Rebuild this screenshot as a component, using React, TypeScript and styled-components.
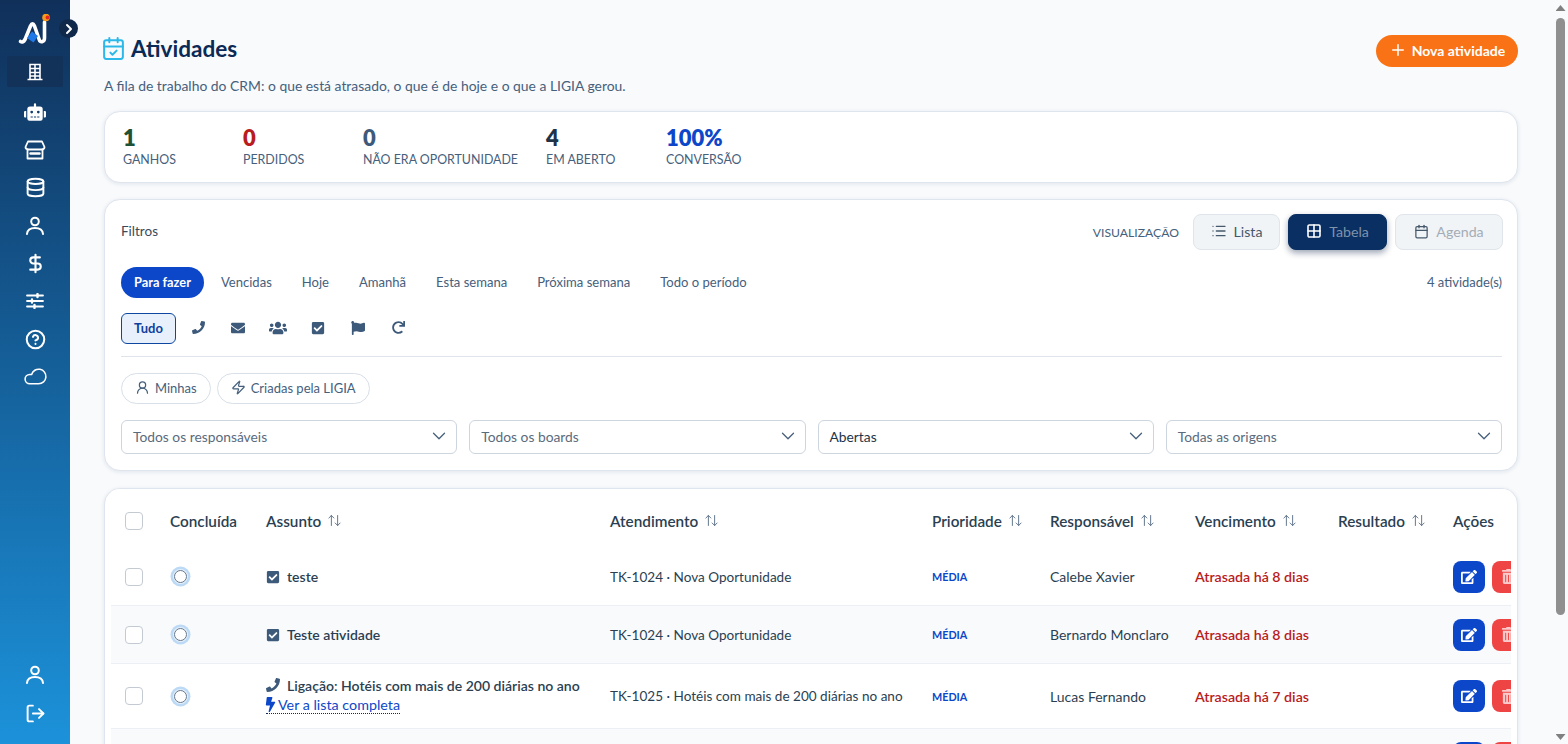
import styled, { createGlobalStyle } from 'styled-components'
import {
  ArrowUpDown, Calendar, CalendarCheck, ChevronDown, ChevronRight, CircleHelp, Cloud, Database,
  DollarSign, Grid2x2, List, LogOut, Plus, UserRound, Zap,
} from 'lucide-react'
import { FaBolt, FaCheckSquare, FaEdit, FaEnvelope, FaFlag, FaPhone, FaRedo, FaRobot, FaTrashAlt, FaUsers } from 'react-icons/fa'

const GlobalStyle = createGlobalStyle`
  * { box-sizing: border-box; }
  html, body { margin: 0; height: 100%; overflow: hidden; }
  body {
    font-family: "Lato", "Noto Sans", sans-serif;
    font-size: 14px;
    color: #1e3348;
    background: #f8fafc;
  }
  button { font-family: inherit; }
`

const Layout = styled.div`
  display: flex;
  height: 744px;
`

const Sidebar = styled.aside`
  position: relative;
  flex: 0 0 70px;
  display: flex;
  flex-direction: column;
  align-items: center;
  padding: 14px 7px 12px;
  background: linear-gradient(180deg, #10305a 0%, #15609a 50%, #1c92da 100%);
`

const Logo = styled.div`
  height: 31px;
  margin-bottom: 11px;
  display: flex;
`

const CollapseBtn = styled.button`
  position: absolute;
  top: 19px;
  left: 59px;
  width: 19px;
  height: 19px;
  padding: 0;
  border: 0;
  border-radius: 50%;
  background: #10294a;
  color: #fff;
  display: flex;
  align-items: center;
  justify-content: center;
`

const NavItem = styled.a<{ $active?: boolean }>`
  width: 56px;
  height: ${(p) => (p.$active ? '31px' : '37.8px')};
  margin-bottom: ${(p) => (p.$active ? '6.5px' : '0')};
  display: flex;
  align-items: center;
  justify-content: center;
  color: #fff;
  border-radius: 2px;
  background: ${(p) => (p.$active ? '#12325a' : 'transparent')};
`

const NavSpacer = styled.div`
  flex: 1;
`

const MirrorCloud = styled(Cloud)`
  transform: scaleX(-1);
`

const Main = styled.main`
  flex: 1;
  min-width: 0;
  height: 744px;
  overflow: hidden;
  padding: 33px 35px 0 34px;
`

const ScrollRail = styled.div`
  flex: 0 0 15px;
  height: 744px;
  display: flex;
  flex-direction: column;
  align-items: center;
  background: #f8fafc;
  padding: 5px 0 4px;
`

const ScrollThumb = styled.div`
  flex: none;
  width: 9px;
  height: 597px;
  margin: 7px 0 auto;
  border-radius: 5px;
  background: #8f8f8f;
`

const ScrollArrow = styled.div<{ $down?: boolean }>`
  flex: none;
  width: 10px;
  height: 6px;
  background: #808080;
  clip-path: ${(p) => (p.$down ? 'polygon(0 0, 100% 0, 50% 100%)' : 'polygon(50% 0, 100% 100%, 0 100%)')};
`

const PageHead = styled.header`
  display: flex;
  align-items: center;
  justify-content: space-between;
  height: 34px;
`

const TitleWrap = styled.div`
  display: flex;
  align-items: center;
  gap: 5px;
  margin: 0 0 4px -3px;
  color: #2cb8e8;
`

const Title = styled.h1`
  margin: 0;
  font-size: 22.6px;
  font-weight: 700;
  color: #0b2a55;
`

const PrimaryBtn = styled.button`
  height: 32px;
  width: 142px;
  margin-top: 2px;
  padding: 0 0 2px;
  display: flex;
  align-items: center;
  justify-content: center;
  gap: 5px;
  border: 0;
  border-radius: 16px;
  background: #f97316;
  color: #fff;
  font-size: 14px;
  font-weight: 700;
`

const Subtitle = styled.p`
  margin: 9px 0 16px;
  height: 19px;
  line-height: 19px;
  font-size: 13.9px;
  color: #46607c;
`

const Card = styled.section`
  background: #fff;
  border: 1px solid #dfe5ee;
  border-radius: 16px;
  box-shadow: 0 1px 4px rgba(15, 40, 80, 0.1);
`

const StatsCard = styled(Card)`
  height: 72px;
  display: flex;
  gap: 28px;
  padding: 13px 18px;
  margin-bottom: 16px;
`

const Stat = styled.div`
  min-width: 92px;
`

const StatValue = styled.div<{ $color: string }>`
  font-size: 22px;
  font-weight: 800;
  line-height: 26px;
  color: ${(p) => p.$color};
`

const StatLabel = styled.div`
  margin-top: 1px;
  font-size: 12.4px;
  line-height: 16px;
  color: #46607c;
`

const FilterCard = styled(Card)`
  height: 272px;
  padding: 14px 15px 0 16px;
  margin-bottom: 17px;
`

const FilterHead = styled.div`
  display: flex;
  align-items: center;
  justify-content: space-between;
  height: 36px;
  margin-bottom: 17px;
`

const FilterLabel = styled.span`
  margin-bottom: 2px;
  font-size: 13.5px;
  color: #3a4a5a;
`

const ViewGroup = styled.div`
  display: flex;
  align-items: center;
  gap: 8px;
  margin-right: -1px;
`

const ViewCaption = styled.span`
  font-size: 12.2px;
  color: #46607c;
  margin-right: 6px;
`

const ViewBtn = styled.button<{ $active?: boolean; $width: number; $muted?: boolean }>`
  height: 36px;
  width: ${(p) => p.$width}px;
  padding: 0 0 2px;
  display: flex;
  align-items: center;
  justify-content: center;
  gap: 7px;
  border-radius: 8px;
  font-size: 14.2px;
  border: 1px solid ${(p) => (p.$active ? '#0a2f63' : '#dfe5ea')};
  background: ${(p) => (p.$active ? '#0a2f63' : '#f1f4f6')};
  color: ${(p) => (p.$active ? '#fff' : '#46586c')};
  box-shadow: ${(p) => (p.$active ? '0 3px 6px rgba(10, 30, 70, 0.4)' : 'none')};

  span {
    color: ${(p) => (p.$active ? '#7f93aa' : p.$muted ? '#a3acb6' : '#46586c')};
  }
`

const PeriodRow = styled.div`
  display: flex;
  align-items: center;
  gap: 4px;
  height: 31px;
  margin-bottom: 15px;
`

const PeriodTab = styled.button<{ $active?: boolean }>`
  height: 31px;
  padding: 0 13px 2px;
  border: 0;
  border-radius: 16px;
  font-size: ${(p) => (p.$active ? '12.8px' : '13.05px')};
  font-weight: ${(p) => (p.$active ? 700 : 400)};
  background: ${(p) => (p.$active ? '#0d47c9' : 'transparent')};
  color: ${(p) => (p.$active ? '#fff' : '#46607c')};
`

const ActivityCount = styled.span`
  margin: 0 0 2px auto;
  font-size: 13px;
  color: #46607c;
`

const TypeRow = styled.div`
  display: flex;
  align-items: center;
  gap: 4px;
  height: 31px;
`

const TypeAll = styled.button`
  width: 55px;
  height: 31px;
  padding: 0 0 2px;
  border: 1px solid #0d47a1;
  border-radius: 6px;
  background: #e8f1fb;
  color: #0d3f9e;
  font-size: 13px;
  font-weight: 700;
`

const TypeBtn = styled.button`
  width: 36px;
  height: 31px;
  padding: 0 0 2px;
  border: 0;
  background: none;
  color: #3e5a7a;
  display: flex;
  align-items: center;
  justify-content: center;
`

const Divider = styled.hr`
  border: 0;
  border-top: 1px solid #dfe3ea;
  margin: 12px 0 16px;
`

const ChipRow = styled.div`
  display: flex;
  gap: 6px;
  margin-bottom: 16px;
`

const Chip = styled.button`
  height: 31px;
  padding: 0 13px 2px;
  display: flex;
  align-items: center;
  gap: 5px;
  border: 1px solid #d8dfe8;
  border-radius: 16px;
  background: #fff;
  color: #46607c;
  font-size: 13px;
`

const SelectGrid = styled.div`
  display: grid;
  grid-template-columns: repeat(4, 1fr);
  gap: 12px;
`

const SelectBox = styled.div<{ $filled?: boolean }>`
  height: 34px;
  padding: 0 6px 2px 11px;
  display: flex;
  align-items: center;
  justify-content: space-between;
  border: 1px solid #cdd5df;
  border-radius: 6px;
  font-size: 13.8px;
  color: ${(p) => (p.$filled ? '#1e3348' : '#5a6b7d')};

  svg { color: #46607c; }
`

const TableCard = styled(Card)`
  padding: 0 6px;
  overflow: hidden;
`

const TableClip = styled.div`
  overflow: hidden;
`

const Row = styled.div<{ $shade?: boolean; $tall?: boolean }>`
  display: grid;
  grid-template-columns: 45px 96px 344px 322px 118px 145px 143px 115px 100px;
  align-items: center;
  width: 1460px;
  padding-left: 14px;
  height: ${(p) => (p.$tall ? '65px' : '58px')};
  background: ${(p) => (p.$shade ? '#f8fafc' : '#fff')};
  border-bottom: 1px solid #eceff3;
`

const HeadRow = styled(Row)`
  height: 59px;
  padding-top: 4px;
  border-bottom: 0;
`

const HeadCell = styled.div`
  display: flex;
  align-items: center;
  gap: 6px;
  font-size: 15.3px;
  font-weight: 600;
  color: #2b3f52;

  svg { color: #5c7088; }
`

const Check = styled.span`
  display: block;
  width: 18px;
  height: 18px;
  border: 1px solid #c4cad2;
  border-radius: 4px;
  background: #fff;
`

const Radio = styled.span`
  display: block;
  width: 13px;
  height: 13px;
  margin-left: 4px;
  border: 1.5px solid #66788c;
  border-radius: 50%;
  background: #fff;
  box-shadow: 0 0 0 1px #e6f1fb, 0 0 0 3.5px #bcd9f5;
`

const SubjectLine = styled.div`
  display: flex;
  align-items: center;
  gap: 7px;
  font-size: 14.05px;
  font-weight: 600;
  color: #2b3f52;

  svg { color: #3e5a7a; }
`

const SubjectLink = styled.a`
  display: inline-flex;
  align-items: center;
  gap: 1px;
  margin-top: 3px;
  font-size: 14.3px;
  color: #0d47c9;
  border-bottom: 1px dotted #0b2a55;
  line-height: 16px;

  svg {
    color: #0d47c9;
    margin: 0 -1px 0 -3px;
  }
`

const Cell = styled.div<{ $ticket?: boolean }>`
  font-size: ${(p) => (p.$ticket ? '13.55px' : '14px')};
  color: #2b3f52;
`

const Priority = styled.span`
  font-size: 10.8px;
  font-weight: 700;
  color: #0d47c9;
`

const Overdue = styled.span`
  font-size: 14.2px;
  font-weight: 600;
  color: #b91c1c;
`

const Actions = styled.div`
  display: flex;
  gap: 7px;
`

const ActionBtn = styled.button<{ $danger?: boolean }>`
  flex: 0 0 32px;
  width: 32px;
  height: 32px;
  padding: 0;
  border: 0;
  border-radius: 8px;
  display: flex;
  align-items: center;
  justify-content: center;
  color: ${(p) => (p.$danger ? '#fbc9c9' : '#fff')};
  background: ${(p) => (p.$danger ? '#ef4444' : '#0d47c9')};
`

const LogoMark = () => (
  <svg width="34" height="31" viewBox="0 0 34 31">
    <path d="M2.5 27.5 Q5 29 7 25.5 L12.5 12 Q14.5 7.5 16.5 12 L21 25 Q22 28.5 24.5 27.5 Q26.5 27 26.5 24 L26.5 8" fill="none" stroke="#fff" strokeWidth="3.6" strokeLinecap="round" strokeLinejoin="round" />
    <path d="M14 17.5 L20 22 L15.5 28.5 L9 24 Z" fill="#1e78e6" />
    <circle cx="28" cy="3.5" r="3.8" fill="#f59a1c" />
    <circle cx="29.5" cy="3.5" r="1.9" fill="#e5261f" />
  </svg>
)

const BuildingGlyph = () => (
  <svg width="16" height="18" viewBox="0 0 16 18" fill="none" stroke="currentColor" strokeWidth="1.6">
    <path d="M3 16.5 V1.5 H13 V16.5 M0.5 16.5 H15.5 M8 1.5 V16.5 M3 5.5 H13 M3 9.5 H13 M3 13 H13" />
  </svg>
)

const StoreGlyph = () => (
  <svg width="22" height="20" viewBox="0 0 22 20" fill="none" stroke="currentColor" strokeWidth="1.8" strokeLinejoin="round" strokeLinecap="round">
    <path d="M4 1.5 H18 L20.5 7 Q20.5 9.5 17.5 9.5 H4.5 Q1.5 9.5 1.5 7 Z" />
    <path d="M3.5 9.5 V18.5 H18.5 V9.5" />
    <path d="M6.5 13.5 H15.5" strokeWidth="2.4" />
  </svg>
)

const UserGlyph = () => (
  <svg width="20" height="20" viewBox="0 0 20 20" fill="none" stroke="currentColor" strokeWidth="2" strokeLinecap="round">
    <circle cx="10" cy="5.5" r="3.8" />
    <path d="M2 18 Q2.5 12 10 12 Q17.5 12 18 18" />
  </svg>
)

const SlidersGlyph = () => (
  <svg width="18" height="16" viewBox="0 0 18 16" fill="none" stroke="currentColor" strokeWidth="1.8" strokeLinecap="round">
    <path d="M1 2.5 H17 M1 8 H17 M1 13.5 H17" />
    <path d="M11.5 1 V4 M6 6.5 V9.5 M8.5 12 V15" strokeWidth="2.4" />
  </svg>
)

const rows = [
  { kind: 'task', subject: 'teste', ticket: 'TK-1024 · Nova Oportunidade', owner: 'Calebe Xavier', due: 'Atrasada há 8 dias' },
  { kind: 'task', subject: 'Teste atividade', ticket: 'TK-1024 · Nova Oportunidade', owner: 'Bernardo Monclaro', due: 'Atrasada há 8 dias', shade: true },
  { kind: 'call', subject: 'Ligação: Hotéis com mais de 200 diárias no ano', ticket: 'TK-1025 · Hotéis com mais de 200 diárias no ano', owner: 'Lucas Fernando', due: 'Atrasada há 7 dias', link: 'Ver a lista completa' },
]

const columns = ['Assunto', 'Atendimento', 'Prioridade', 'Responsável', 'Vencimento', 'Resultado']
const periods = ['Vencidas', 'Hoje', 'Amanhã', 'Esta semana', 'Próxima semana', 'Todo o período']
const selects = [
  { label: 'Todos os responsáveis' },
  { label: 'Todos os boards' },
  { label: 'Abertas', filled: true },
  { label: 'Todas as origens' },
]

const RowActions = () => (
  <Actions>
    <ActionBtn><FaEdit size={16} /></ActionBtn>
    <ActionBtn $danger><FaTrashAlt size={15} /></ActionBtn>
  </Actions>
)

export default function App() {
  return (
    <Layout>
      <GlobalStyle />
      <Sidebar>
        <Logo><LogoMark /></Logo>
        <CollapseBtn><ChevronRight size={16} strokeWidth={3} /></CollapseBtn>
        <NavItem $active><BuildingGlyph /></NavItem>
        <NavItem><FaRobot size={22} /></NavItem>
        <NavItem><StoreGlyph /></NavItem>
        <NavItem><Database size={21} strokeWidth={2.2} /></NavItem>
        <NavItem><UserGlyph /></NavItem>
        <NavItem><DollarSign size={21} strokeWidth={2.4} /></NavItem>
        <NavItem><SlidersGlyph /></NavItem>
        <NavItem><CircleHelp size={21} strokeWidth={2.3} /></NavItem>
        <NavItem><MirrorCloud size={25} strokeWidth={1.5} /></NavItem>
        <NavSpacer />
        <NavItem><UserGlyph /></NavItem>
        <NavItem><LogOut size={21} strokeWidth={2.2} /></NavItem>
      </Sidebar>

      <Main>
        <PageHead>
          <TitleWrap>
            <CalendarCheck size={25} strokeWidth={1.9} />
            <Title>Atividades</Title>
          </TitleWrap>
          <PrimaryBtn><Plus size={18} />Nova atividade</PrimaryBtn>
        </PageHead>
        <Subtitle>A fila de trabalho do CRM: o que está atrasado, o que é de hoje e o que a LIGIA gerou.</Subtitle>

        <StatsCard>
          <Stat><StatValue $color="#1f5135">1</StatValue><StatLabel>GANHOS</StatLabel></Stat>
          <Stat><StatValue $color="#b91c1c">0</StatValue><StatLabel>PERDIDOS</StatLabel></Stat>
          <Stat><StatValue $color="#3e5a7a">0</StatValue><StatLabel>NÃO ERA OPORTUNIDADE</StatLabel></Stat>
          <Stat><StatValue $color="#1e3348">4</StatValue><StatLabel>EM ABERTO</StatLabel></Stat>
          <Stat><StatValue $color="#0d47c9">100%</StatValue><StatLabel>CONVERSÃO</StatLabel></Stat>
        </StatsCard>

        <FilterCard>
          <FilterHead>
            <FilterLabel>Filtros</FilterLabel>
            <ViewGroup>
              <ViewCaption>VISUALIZAÇÃO</ViewCaption>
              <ViewBtn $width={87}><List size={16} /><span>Lista</span></ViewBtn>
              <ViewBtn $width={99} $active><Grid2x2 size={16} strokeWidth={2.4} /><span>Tabela</span></ViewBtn>
              <ViewBtn $width={108} $muted><Calendar size={15} /><span>Agenda</span></ViewBtn>
            </ViewGroup>
          </FilterHead>

          <PeriodRow>
            <PeriodTab $active>Para fazer</PeriodTab>
            {periods.map((p) => <PeriodTab key={p}>{p}</PeriodTab>)}
            <ActivityCount>4 atividade(s)</ActivityCount>
          </PeriodRow>

          <TypeRow>
            <TypeAll>Tudo</TypeAll>
            <TypeBtn><FaPhone size={13} /></TypeBtn>
            <TypeBtn><FaEnvelope size={14} /></TypeBtn>
            <TypeBtn><FaUsers size={18} /></TypeBtn>
            <TypeBtn><FaCheckSquare size={14} /></TypeBtn>
            <TypeBtn><FaFlag size={14} /></TypeBtn>
            <TypeBtn><FaRedo size={13} /></TypeBtn>
          </TypeRow>
          <Divider />

          <ChipRow>
            <Chip><UserRound size={15} />Minhas</Chip>
            <Chip><Zap size={15} />Criadas pela LIGIA</Chip>
          </ChipRow>

          <SelectGrid>
            {selects.map((s) => (
              <SelectBox key={s.label} $filled={s.filled}>
                {s.label}
                <ChevronDown size={22} strokeWidth={1.4} />
              </SelectBox>
            ))}
          </SelectGrid>
        </FilterCard>

        <TableCard>
          <TableClip>
            <HeadRow>
              <Check />
              <HeadCell>Concluída</HeadCell>
              {columns.map((c) => (
                <HeadCell key={c}>{c}<ArrowUpDown size={15} strokeWidth={1.5} /></HeadCell>
              ))}
              <HeadCell>Ações</HeadCell>
            </HeadRow>
            {rows.map((r, i) => (
              <Row key={r.subject} $shade={i === 1} $tall={!!r.link}>
                <Check />
                <Radio />
                <div>
                  <SubjectLine>
                    {r.kind === 'call' ? <FaPhone size={14} /> : <FaCheckSquare size={14} />}
                    {r.subject}
                  </SubjectLine>
                  {r.link && <SubjectLink><FaBolt size={15} />{r.link}</SubjectLink>}
                </div>
                <Cell $ticket>{r.ticket}</Cell>
                <Priority>MÉDIA</Priority>
                <Cell>{r.owner}</Cell>
                <Overdue>{r.due}</Overdue>
                <Cell />
                <RowActions />
              </Row>
            ))}
            <Row $shade>
              <Check />
              <Radio />
              <Cell />
              <Cell />
              <Cell />
              <Cell />
              <Cell />
              <Cell />
              <RowActions />
            </Row>
          </TableClip>
        </TableCard>
      </Main>

      <ScrollRail>
        <ScrollArrow />
        <ScrollThumb />
        <ScrollArrow $down />
      </ScrollRail>
    </Layout>
  )
}
